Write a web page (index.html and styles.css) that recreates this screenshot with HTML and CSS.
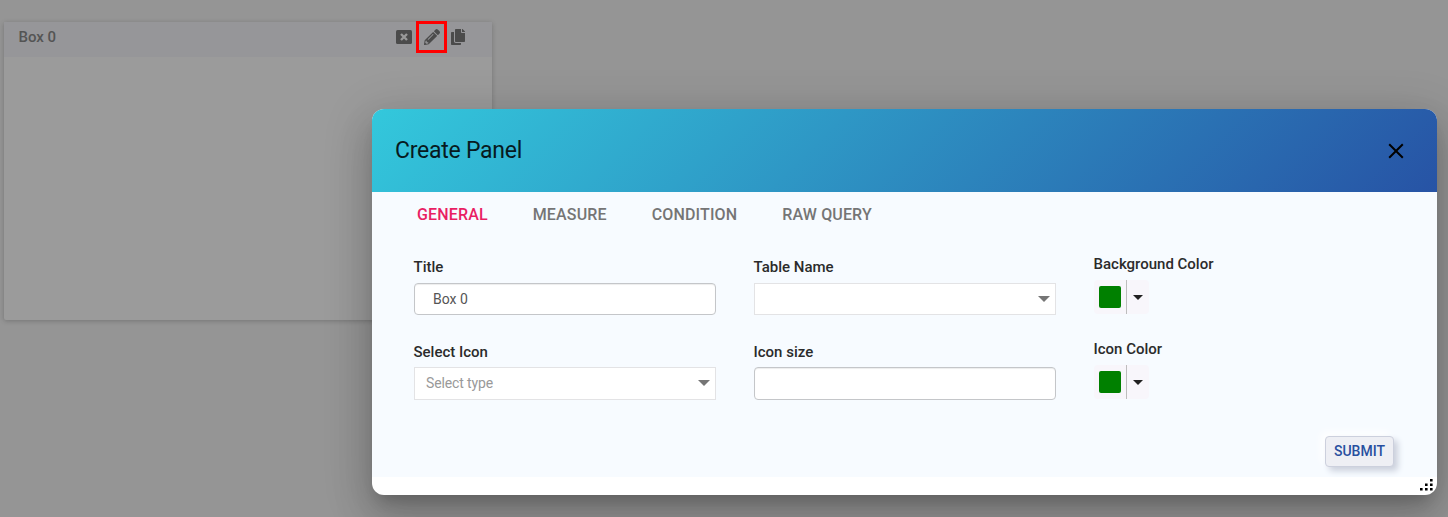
FILE: index.html
```html
<!DOCTYPE html>
<html lang="en">
<head>
<meta charset="utf-8">
<title>Create Panel</title>
<link rel="stylesheet" href="styles.css">
</head>
<body>
<main class="board">
  <section class="widget">
    <header class="widget-head">
      <span class="widget-title">Box 0</span>
      <div class="widget-tools">
        <svg class="tool-close" width="16" height="14" viewBox="0 0 16 14"><rect width="16" height="14" rx="1.5"/><path class="cross" d="M5 4l6 6M11 4l-6 6"/></svg>
        <span class="highlight"><svg width="16" height="16" viewBox="0 0 512 512"><path fill-rule="evenodd" d="M498 142l-46 46c-5 5-13 5-17 0L324 77c-5-5-5-12 0-17l46-46c19-19 49-19 68 0l60 60c19 19 19 49 0 68zm-214-42L22 362 0 484c-3 16 12 30 28 28l122-22 262-262c5-5 5-13 0-17L301 100c-4-5-12-5-17 0zM124 340c-5-6-5-14 0-20l154-154c6-5 14-5 20 0s5 14 0 20L144 340c-6 5-14 5-20 0zm-36 84h48v36l-64 12-32-32 12-64h36v48z"/></svg></span>
        <svg width="14" height="16" viewBox="0 0 448 512"><path d="M320 448v40c0 13-11 24-24 24H24c-13 0-24-11-24-24V120c0-13 11-24 24-24h72v296c0 31 25 56 56 56h168zm0-344V0H152c-13 0-24 11-24 24v368c0 13 11 24 24 24h272c13 0 24-11 24-24V128H344c-13 0-24-11-24-24zm121-31L375 7c-4-5-11-7-17-7h-6v96h96v-6c0-6-3-12-7-17z"/></svg>
      </div>
    </header>
  </section>
</main>
<div class="dialog" role="dialog" aria-label="Create Panel">
  <header class="dialog-head">
    <h1 class="dialog-title">Create Panel</h1>
    <svg class="dialog-close" width="16" height="16" viewBox="0 0 16 16"><path d="M1.2 1.2l13.6 13.6M14.8 1.2L1.2 14.8"/></svg>
  </header>
  <div class="dialog-body">
    <nav class="tabs">
      <span class="tab active">GENERAL</span>
      <span class="tab">MEASURE</span>
      <span class="tab">CONDITION</span>
      <span class="tab">RAW QUERY</span>
    </nav>
    <form class="fields">
      <div class="field"><label>Title</label><div class="input">Box 0</div></div>
      <div class="field"><label>Table Name</label><div class="select"><span></span><i class="arrow"></i></div></div>
      <div class="field color"><label>Background Color</label><div class="picker"><span class="swatch"></span><span class="drop"><i class="caret"></i></span></div></div>
      <div class="field"><label>Select Icon</label><div class="select tall"><span>Select type</span><i class="arrow"></i></div></div>
      <div class="field"><label>Icon size</label><div class="input tall"></div></div>
      <div class="field color"><label>Icon Color</label><div class="picker"><span class="swatch"></span><span class="drop"><i class="caret"></i></span></div></div>
    </form>
    <div class="actions"><button class="submit" type="button">SUBMIT</button></div>
  </div>
  <footer class="dialog-foot">
    <svg width="13" height="12" viewBox="0 0 13 12"><path d="M10 0h2.6v2.6H10zM5 4.5h2.6v2.6H5zM10 4.5h2.6v2.6H10zM0 9h2.6v2.6H0zM5 9h2.6v2.6H5zM10 9h2.6v2.6H10z"/></svg>
  </footer>
</div>
</body>
</html>
```
FILE: styles.css
```css
* { box-sizing: border-box; }

body {
  margin: 0;
  height: 517px;
  overflow: hidden;
  background: #959595;
  font-family: Roboto, "Liberation Sans", sans-serif;
}

.board { padding: 22px 4px; }

.widget {
  width: 488px;
  height: 298px;
  background: #9b9b9b;
  border-radius: 2px;
  box-shadow: 0 1px 5px rgba(0, 0, 0, .22);
}

.widget-head {
  display: flex;
  justify-content: space-between;
  height: 35px;
  padding: 0 27px 0 14.5px;
  background: #969699;
}

.widget-title {
  font-size: 15px;
  font-weight: 500;
  line-height: 30px;
  color: #545454;
}

.widget-tools {
  display: flex;
  align-items: center;
  height: 30px;
  fill: #4b4b4b;
}

.tool-close { margin-right: 4px; }

.cross { stroke: #999; stroke-width: 2.4; }

.highlight {
  display: flex;
  align-items: center;
  justify-content: center;
  width: 31px;
  height: 32px;
  margin-right: 4px;
  border: 3px solid #f00;
}

.dialog {
  position: absolute;
  left: 372px;
  top: 109px;
  width: 1065px;
  height: 386px;
  display: flex;
  flex-direction: column;
  overflow: hidden;
  background: #fff;
  border-radius: 12px;
  box-shadow: 0 11px 15px -7px rgba(0, 0, 0, .2), 0 24px 38px 3px rgba(0, 0, 0, .14), 0 9px 46px 8px rgba(0, 0, 0, .12);
}

.dialog-head {
  display: flex;
  align-items: center;
  justify-content: space-between;
  flex: 0 0 83px;
  padding: 0 33px 0 23px;
  background: linear-gradient(135deg, #33c8dc, #2753a5);
}

.dialog-title {
  margin: 0;
  font-size: 23px;
  font-weight: 400;
  line-height: 28px;
  letter-spacing: -.25px;
  color: #071a20;
}

.dialog-close { stroke: #000; stroke-width: 2; }

.dialog-body {
  flex: 1;
  padding: 0 42px;
  background: #f7fbff;
}

.tabs {
  display: flex;
  gap: 45px;
  padding-left: 3px;
  font-size: 16px;
  font-weight: 500;
  letter-spacing: .15px;
  line-height: 45px;
  color: #757575;
}

.tab.active { color: #e91e63; }

.fields {
  display: grid;
  grid-template-columns: 302px 302px auto;
  column-gap: 38px;
  grid-template-rows: 85px 85px;
  padding-top: 20px;
}

.field label {
  display: block;
  height: 26px;
  margin-left: -.5px;
  font-size: 15px;
  font-weight: 500;
  line-height: 20px;
  color: #2b2b2b;
}

.input,
.select {
  display: flex;
  align-items: center;
  height: 32px;
  background: #fff;
  font-size: 14px;
}

.input.tall,
.select.tall { height: 33px; margin-top: -1px; }

.select.tall {
  padding-bottom: 1px;
  letter-spacing: -.12px;
}

.input {
  padding: 0 18px;
  border: 1px solid #c4c6c9;
  border-radius: 4px;
  box-shadow: inset 0 1px 1px rgba(0, 0, 0, .075);
  color: #555;
}

.select {
  justify-content: space-between;
  padding: 0 5px 0 11px;
  border: 1px solid #e3e3e5;
  color: #999;
}

.arrow {
  border: 6px solid transparent;
  border-top-color: #757575;
  border-bottom: 0;
}

.color { margin-top: -3px; }

.picker {
  display: flex;
  align-items: center;
  width: 55px;
  height: 34px;
  background: #f8f6fb;
  border-radius: 4px;
}

.swatch {
  width: 22px;
  height: 22px;
  margin: 0 5px;
  background: #008000;
  border-radius: 2px;
}

.drop {
  display: flex;
  align-items: center;
  justify-content: center;
  width: 23px;
  height: 34px;
  border-left: 1px solid #bdbdbd;
}

.caret {
  border: 5px solid transparent;
  border-top-color: #212121;
  border-bottom: 0;
}

.actions {
  display: flex;
  justify-content: flex-end;
  margin-top: 9px;
}

.submit {
  width: 69px;
  height: 31px;
  margin-right: 1px;
  padding: 0 0 2px;
  background: #eeeff4;
  border: 1px solid #ccd0dd;
  border-radius: 4px;
  box-shadow: 4px 4px 6px #cbd0dc, -4px -4px 8px #fff;
  font: 500 14px Roboto, "Liberation Sans", sans-serif;
  color: #284f9f;
}

.dialog-foot {
  display: flex;
  align-items: flex-start;
  justify-content: flex-end;
  flex: 0 0 18px;
  padding: 2px 4px 0 0;
}
```
